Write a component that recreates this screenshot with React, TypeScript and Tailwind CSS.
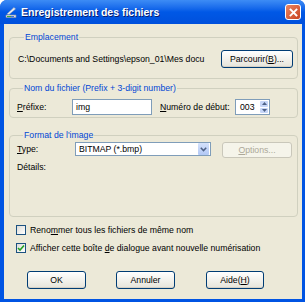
import type { ReactNode } from 'react';

// Boîte de dialogue « Enregistrement des fichiers » — style Windows XP (Luna)

function Group({ title, className, children }: { title: string; className?: string; children: ReactNode }) {
  return (
    <fieldset className={`ml-[5px] mr-[4px] rounded-[4px] border border-[#D0D0BF] ${className ?? ''}`}>
      <legend className="ml-[6px] px-[1px] leading-[12px] text-[#0046D5]">{title}</legend>
      {children}
    </fieldset>
  );
}

function XpButton({ children, className }: { children: ReactNode; className?: string }) {
  return (
    <div
      className={`flex h-[18px] items-center justify-center rounded-[3px] border border-[#003C74] bg-gradient-to-b from-[#FFFFFF] to-[#E6E4DA] leading-[12px] shadow-[inset_0_-1px_0_#D6D0C5] ${className ?? ''}`}
    >
      {children}
    </div>
  );
}

function CheckBox({ checked }: { checked?: boolean }) {
  return (
    <span className="flex h-[10px] w-[10px] shrink-0 items-center justify-center border border-[#1C5180] bg-gradient-to-br from-[#DCDCD7] to-[#FFFFFF]">
      {checked && (
        <svg width="8" height="8" viewBox="0 0 8 8">
          <path d="M1 4 L3 6 L7 1.5" fill="none" stroke="#21A121" strokeWidth="1.6" />
        </svg>
      )}
    </span>
  );
}

export default function App() {
  return (
    <div className="h-[302px] w-[305px] whitespace-nowrap font-['Liberation_Sans',Arial,sans-serif] text-[8.7px] text-black">
      <div className="flex h-full flex-col rounded-t-[7px] bg-[#0054E3]">
        {/* barre de titre */}
        <div className="flex h-[24px] shrink-0 items-center rounded-t-[7px] bg-gradient-to-b from-[#3D8CF5] via-[#0058E6] to-[#0050DC] pl-[5px] pr-[4px]">
          <svg width="13" height="13" viewBox="0 0 13 13" className="shrink-0">
            <path d="M2 8 L9 1.5 L10.5 3 L4 8.5 Z" fill="#F2F2F2" stroke="#9AA6B8" strokeWidth="0.6" />
            <path d="M1 9 L11 9 L11 11.5 L1 11.5 Z" fill="#DADDE3" stroke="#8A94A6" strokeWidth="0.6" />
            <rect x="2" y="10" width="4" height="1" fill="#3BAA3B" />
            <rect x="6" y="10" width="3" height="1" fill="#3F6FD8" />
          </svg>
          <span className="ml-[3px] flex-1 text-[10.5px] font-bold leading-[14px] text-white [text-shadow:1px_1px_0_#0A1E6E]">
            Enregistrement des fichiers
          </span>
          <div className="flex h-[16px] w-[16px] items-center justify-center rounded-[3px] border border-white bg-gradient-to-br from-[#E98563] to-[#C8401B]">
            <svg width="9" height="9" viewBox="0 0 9 9">
              <path d="M1.5 1.5 L7.5 7.5 M7.5 1.5 L1.5 7.5" stroke="white" strokeWidth="1.8" strokeLinecap="square" />
            </svg>
          </div>
        </div>

        {/* corps */}
        <div className="mb-[3px] ml-[4px] mr-[3px] flex flex-1 flex-col bg-[#ECE9D8] pt-[7px]">
          <Group title="Emplacement" className="pb-[10px] pl-[8px] pr-[4px] pt-[7px]">
            <div className="flex items-center justify-between">
              <span className="leading-[12px]">C:\Documents and Settings\epson_01\Mes docu</span>
              <XpButton className="w-[72px]">
                <span>
                  Parcourir(<u>B</u>)...
                </span>
              </XpButton>
            </div>
          </Group>

          <Group title="Nom du fichier (Prefix + 3-digit number)" className="mt-[3px] pb-[2px] pl-[7px] pt-[5px]">
            <div className="flex h-[16px] items-center">
              <span className="w-[55px] leading-[12px]">
                <u>P</u>réfixe:
              </span>
              <div className="flex h-[16px] w-[80px] items-center border border-[#7F9DB9] bg-white pl-[3px] leading-[12px]">
                img
              </div>
              <span className="ml-[8px] w-[75px] leading-[12px]">
                <u>N</u>uméro de début:
              </span>
              <div className="flex h-[16px] w-[35px] items-center border border-[#7F9DB9] bg-white pl-[4px] leading-[12px]">
                <span className="flex-1">003</span>
                <div className="mr-[1px] flex h-[12px] w-[8px] flex-col gap-[1px]">
                  <div className="flex flex-1 items-center justify-center rounded-[1px] bg-[#C6D6F8]">
                    <svg width="5" height="3" viewBox="0 0 5 3">
                      <path d="M0 3 L2.5 0 L5 3 Z" fill="#4D6185" />
                    </svg>
                  </div>
                  <div className="flex flex-1 items-center justify-center rounded-[1px] bg-[#C6D6F8]">
                    <svg width="5" height="3" viewBox="0 0 5 3">
                      <path d="M0 0 L2.5 3 L5 0 Z" fill="#4D6185" />
                    </svg>
                  </div>
                </div>
              </div>
            </div>
          </Group>

          <Group title="Format de l'image" className="mt-[11px] pb-[43px] pl-[7px] pr-[4px] pt-[1px]">
            <div className="flex h-[16px] items-start">
              <span className="mt-[1px] w-[58px] leading-[12px]">
                <u>T</u>ype:
              </span>
              <div className="flex h-[14px] w-[136px] items-center border border-[#7F9DB9] bg-white pl-[3px] pr-[1px] leading-[12px]">
                <span className="flex-1">BITMAP (*.bmp)</span>
                <div className="flex h-[12px] w-[11px] items-center justify-center rounded-[1px] bg-gradient-to-b from-[#D5E2FB] to-[#B2C8F5]">
                  <svg width="7" height="5" viewBox="0 0 7 5">
                    <path d="M0.8 0.8 L3.5 3.6 L6.2 0.8" fill="none" stroke="#4D6185" strokeWidth="1.5" />
                  </svg>
                </div>
              </div>
              <div className="ml-[11px] flex h-[16px] w-[70px] items-center justify-center rounded-[3px] border border-[#C9C7BA] bg-[#F5F4EA] leading-[12px] text-[#ACA899]">
                <span>
                  <u>O</u>ptions...
                </span>
              </div>
            </div>
            <div className="mt-[3px] leading-[12px]">Détails:</div>
          </Group>

          <div className="ml-[12px] mt-[6px] flex flex-col gap-[5px]">
            <div className="flex h-[13px] items-center gap-[4px]">
              <CheckBox />
              <span className="leading-[12px]">
                Reno<u>m</u>mer tous les fichiers de même nom
              </span>
            </div>
            <div className="flex h-[13px] items-center gap-[4px]">
              <CheckBox checked />
              <span className="leading-[12px]">
                Afficher cette boîte <u>d</u>e dialogue avant nouvelle numérisation
              </span>
            </div>
          </div>

          <div className="ml-[23px] mt-[17px] flex gap-[30px]">
            <XpButton className="w-[59px]">OK</XpButton>
            <XpButton className="w-[59px]">Annuler</XpButton>
            <XpButton className="ml-[1px] w-[58px]">
              <span>
                Aide(<u>H</u>)
              </span>
            </XpButton>
          </div>
        </div>
      </div>
    </div>
  );
}
